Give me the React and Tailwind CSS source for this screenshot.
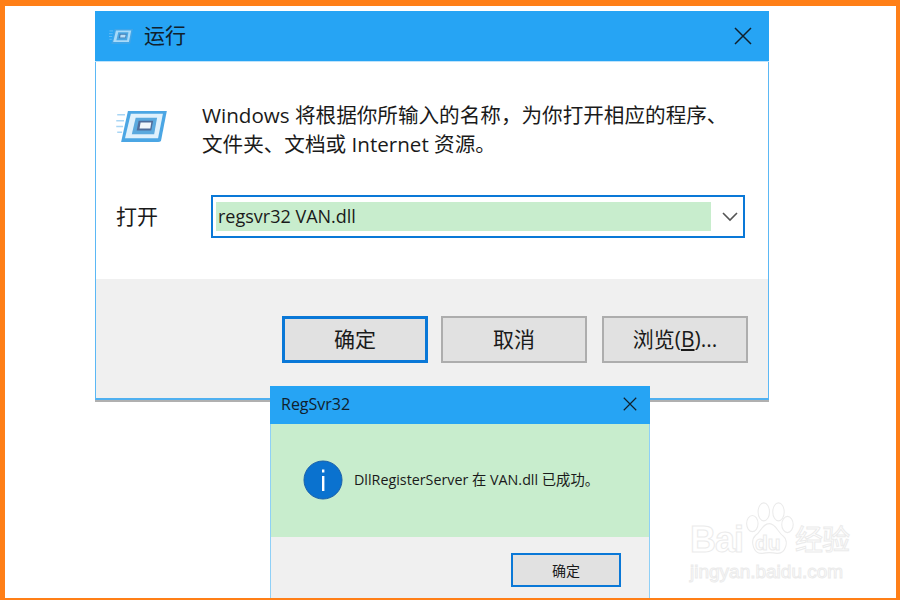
import React from "react";

const latin = "font-['Open_Sans','Noto_Sans_CJK_SC',sans-serif]";

function CloseIcon({ size, className }) {
  return (
    <svg width={size} height={size} viewBox="0 0 18 18" className={className}>
      <path d="M1 1 L17 17 M17 1 L1 17" stroke="#10202c" strokeWidth="1.5" fill="none" />
    </svg>
  );
}

function RunIcon({ w, h, className }) {
  return (
    <svg width={w} height={h} viewBox="0 0 54 36" className={className}>
      <path d="M1 6 H9 M0 12 H8 M0 18 H7 M1 24 H6" stroke="#a9d6f5" strokeWidth="1.5" />
      <path d="M12 2 H52 L46 33 Q45 34 43 34 H5 Z" fill="#4ba6e4" />
      <path d="M15 5 H48 L43 30 H9 Z" fill="#dff1fc" />
      <path d="M20 9 H42 L39 26 H16 Z" fill="#5aa9de" />
      <path d="M23 12 H38 L36 22 H21 Z" fill="#4f6c9a" />
      <path d="M25 14 H36 L35 20 H24 Z" fill="#f3f7fb" />
    </svg>
  );
}

function Button({ children, primary, small, className = "" }) {
  return (
    <div
      className={`flex items-center justify-center bg-[#e1e1e1] text-[#1a1a1a] ${
        small ? "w-[110px] h-[34px] text-[14px] border-[2px]" : "w-[146px] h-[47px] text-[21px]"
      } ${!small && primary ? "border-[3px]" : "border-[2px]"} ${primary ? "border-[#0a78d7]" : "border-[#adadad]"} ${className}`}
    >
      {children}
    </div>
  );
}

function Watermark() {
  const outline = "text-transparent [-webkit-text-stroke:1px_#ebebeb] font-['Liberation_Sans',sans-serif]";
  return (
    <div className="absolute left-[690px] top-[502px] w-[164px] h-[82px]">
      <svg width="49" height="54" viewBox="0 0 60 60" preserveAspectRatio="none" className="absolute left-[55px] top-0" fill="#fff" stroke="#ebebeb" strokeWidth="1.3">
        <ellipse cx="9" cy="24" rx="7" ry="9" />
        <ellipse cx="23" cy="11" rx="7" ry="10" />
        <ellipse cx="41" cy="11" rx="7" ry="10" />
        <ellipse cx="52" cy="25" rx="7" ry="9" />
        <path d="M30 24 C38 24 40 34 47 38 C54 43 50 58 39 57 C33 56 27 56 21 57 C10 58 6 43 13 37 C20 33 21 24 30 24 Z" />
      </svg>
      <div className={`absolute left-0 top-[20px] text-[36px] font-bold tracking-[-1px] leading-none ${outline}`}>Bai</div>
      <div className={`absolute left-[65px] top-[30px] text-[21px] font-bold leading-none ${outline}`}>du</div>
      <div className="absolute left-[105px] top-[22px] text-[28px] leading-none tracking-[-1px] text-transparent [-webkit-text-stroke:1px_#ebebeb] font-['Noto_Sans_CJK_SC',sans-serif]">经验</div>
      <div className={`absolute left-0 top-[60px] text-[19px] leading-none ${outline}`}>jingyan.baidu.com</div>
    </div>
  );
}

export default function App() {
  return (
    <div className={`relative w-[900px] h-[600px] overflow-hidden bg-white border-[#ff7f17] border-t-[6px] border-r-[4px] border-b-[2px] border-l-[5px] ${latin}`}>
      {/* the positions below are measured from the page corner, so undo the frame */}
      <div className="absolute -left-[5px] -top-[6px] w-[900px] h-[600px]">
        {/* run window */}
        <div className="absolute left-[95px] top-[11px] w-[674px] h-[389px] flex flex-col border-x border-[#5bb8f5] border-b-[2px] border-b-[#4fb0f0] shadow-[0_2px_0_#b0b0b0]">
          <div className="h-[51px] shrink-0 bg-[#26a4f4] flex items-center pl-[14px] pr-[17px] border-b border-b-[#bfe3fb] -mx-px">
            <RunIcon w={25} h={17} className="opacity-70" />
            <span className="ml-[10px] text-[21px] text-[#10202c]">运行</span>
            <CloseIcon size={18} className="ml-auto" />
          </div>
          <div className="h-[217px] shrink-0 bg-white flex flex-col pl-[20px]">
            <div className="flex pt-[39px]">
              <RunIcon w={53} h={35} className="mt-[8px] shrink-0" />
              <div className="ml-[33px] text-[20.6px] leading-[29px] text-[#1a1a1a] whitespace-nowrap">
                <div>Windows 将根据你所输入的名称，为你打开相应的程序、</div>
                <div>文件夹、文档或 Internet 资源。</div>
              </div>
            </div>
            <div className="flex items-center mt-[36px]">
              <span className="text-[21px] text-[#1a1a1a] w-[95px] shrink-0">打开</span>
              <div className="w-[534px] h-[43px] border-[2px] border-[#0a78d7] flex items-center pl-[3px] pr-[5px] bg-white">
                <div className="flex-1 h-[29px] bg-[#c8edcd] flex items-center pl-[2px] text-[18px] text-[#1a1a1a]">regsvr32 VAN.dll</div>
                <svg width="16" height="10" viewBox="0 0 16 10" className="ml-[11px]">
                  <path d="M1 1 L8 8 L15 1" stroke="#555" strokeWidth="1.6" fill="none" />
                </svg>
              </div>
            </div>
          </div>
          <div className="flex-1 bg-[#f0f0f0] flex justify-end gap-[14px] pt-[37px] pr-[20px]">
            <Button primary>确定</Button>
            <Button className="-ml-px mr-px">取消</Button>
            <Button>浏览(<u>B</u>)...</Button>
          </div>
        </div>

        {/* regsvr32 message box, sits over the run window */}
        <div className="absolute left-[270px] top-[386px] w-[380px] h-[214px] flex flex-col border-x border-[#8fd0f7]">
          <div className="h-[38px] shrink-0 -mx-px bg-[#26a4f4] flex items-center pl-[11px] pr-[13px] pb-[2px]">
            <span className="text-[16px] text-[#10202c]">RegSvr32</span>
            <CloseIcon size={14} className="ml-auto" />
          </div>
          <div className="h-[113px] shrink-0 bg-[#c8edcd] flex items-center pl-[32px] pb-[2px]">
            <svg width="40" height="40" viewBox="0 0 40 40" className="shrink-0">
              <circle cx="20" cy="20" r="19" fill="#0a72cf" stroke="#1a5fa8" strokeWidth="1" />
              <rect x="19" y="16" width="2.4" height="15" fill="#fff" />
              <rect x="19" y="9.5" width="2.4" height="3" fill="#fff" />
            </svg>
            <span className="ml-[11px] text-[14.3px] text-[#1a1a1a] whitespace-nowrap">DllRegisterServer 在 VAN.dll 已成功。</span>
          </div>
          <div className="flex-1 bg-[#f0f0f0] flex justify-end pt-[16px] pr-[28px]">
            <Button primary small>确定</Button>
          </div>
        </div>

        <Watermark />
      </div>
    </div>
  );
}
